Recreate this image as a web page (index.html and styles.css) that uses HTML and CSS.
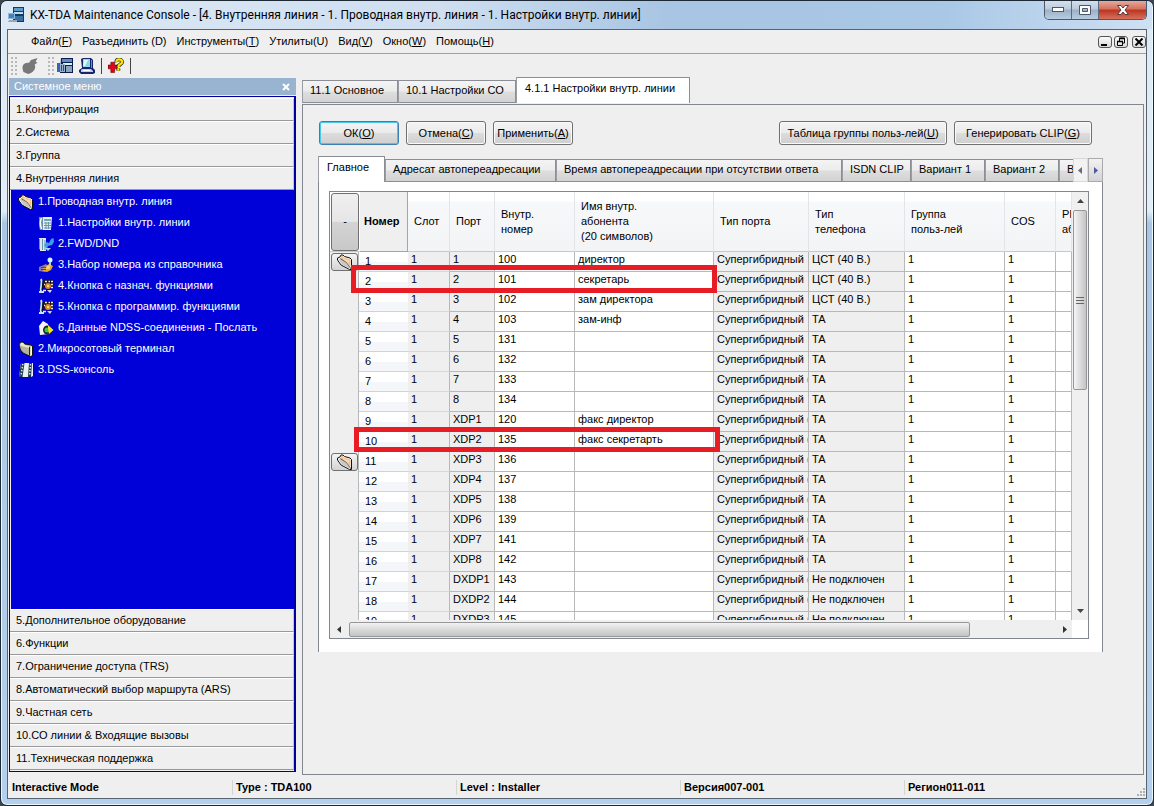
FILE: index.html
```html
<!DOCTYPE html>
<html lang="ru">
<head>
<meta charset="utf-8">
<title>KX-TDA Maintenance Console</title>
<link rel="stylesheet" href="styles.css">
</head>
<body>
<svg class="defs" aria-hidden="true">
  <symbol id="i-folder-open" viewBox="0 0 16 16">
    <path d="M.5 4 3 3 4 1H6L7.500 2.500 13 4 14.500 5.500V15.500H12.500L4 11 .5 6Z" fill="#fff" stroke="#111" stroke-linejoin="round"/>
    <path d="M3.500 4 4.500 2H6L7 3.500 12.500 5 13.500 6V14L11 9 5 6Z" fill="#f5c08a"/>
    <path d="M5 3 8 5 12 6.500V9L7 6Z" fill="#fbdcb4"/>
    <path d="M1 4.500 4 5.500 9.500 9 13 14.500H12L5 10.500Z" fill="#c8c8c8"/>
    <path d="M3 4.500 9.500 8.500 14 15" fill="none" stroke="#444" stroke-width=".8"/>
  </symbol>
  <symbol id="i-folder-shut" viewBox="0 0 16 16">
    <path d="M1 4 2.500 1H5L7 3 13 4 14.500 5V14.500L12.500 15.500 5 12 2.500 9Z" fill="#b4b49c" stroke="#111" stroke-linejoin="round"/>
    <path d="M2 4 3 2H5L6.500 4 11 5 11.500 7 5 5.500Z" fill="#e8e8d8"/>
    <path d="M11.500 6V14.500" stroke="#222"/>
    <path d="M12.500 5.500H14V14L12.500 15Z" fill="#ffffc4"/>
  </symbol>
  <symbol id="i-phone" viewBox="0 0 16 16">
    <path d="M1 2H14L13 15H2Z" fill="#e6f0f4"/>
    <path d="M1 2H5V15H2L1 10Z" fill="#6c93a6"/>
    <path d="M3.500 3C2 6 2 10 3.500 14" stroke="#fff" stroke-width="1.500" fill="none"/>
    <path d="M6 4H13V6H6Z" fill="#6fa7bc"/>
    <path d="M6 8H13M6 10.500H13M6 13H13M8 7V14M10.500 7V14" stroke="#6a94aa" fill="none"/>
  </symbol>
  <symbol id="i-fwd" viewBox="0 0 16 16">
    <path d="M1 2H8V15H2Z" fill="#dce8ee"/>
    <path d="M1.500 3V13M4.500 3V14M7 4V14" stroke="#6a94aa" fill="none"/>
    <path d="M6 9 9 6 11 7 13 3 15.500 2 16 6 14 9 10 10 9 13Z" fill="#38a0e8"/>
    <path d="M7 12H13L10 15Z" fill="#a8d8f0"/>
  </symbol>
  <symbol id="i-book" viewBox="0 0 16 16">
    <path d="M1 10 8 7 10 9 7 15 1 14Z" fill="#8878a0"/>
    <path d="M5 11 11 7 15 9 13 13 9 15 5 14Z" fill="#e8a830"/>
    <path d="M9 9 13 8 11 12 8 12Z" fill="#f8d868"/>
    <path d="M3 10.500H8M3 12.500H8" stroke="#4d4166"/>
    <circle cx="12" cy="3" r="2.500" fill="#d5f3ff"/>
    <path d="M12 5V9" stroke="#a8d0e0" stroke-width="2"/>
  </symbol>
  <symbol id="i-keys" viewBox="0 0 16 16">
    <path d="M6 2H15V10H6Z" fill="#161628"/>
    <path d="M3 1C5 5 2 9 3 13M1 14H6" stroke="#c4e4ee" stroke-width="2" fill="none"/>
    <path d="M5 3 4 12" stroke="#111"/>
    <path d="M7 3.500H9M10.500 3.500H12M13 3.500H15M6 6.500H7M13 6.500H15M5 12.500H8M13 9.500H15" stroke="#e8e8e8" stroke-width="1.500"/>
    <circle cx="10" cy="8" r="3" fill="#e08818"/>
    <circle cx="10" cy="8" r="1.200" fill="#f8e070"/>
    <path d="M9 12H14L12 15Z" fill="#cfdde4"/>
  </symbol>
  <symbol id="i-send" viewBox="0 0 16 16">
    <path d="M1 6 5 1 10 4 11 14 2 15Z" fill="#f4f4f4"/>
    <circle cx="9.500" cy="10" r="4.500" fill="#222"/>
    <circle cx="9" cy="10" r="2.500" fill="#38c848"/>
    <path d="M10 8V5L15.500 10 11 14Z" fill="#f8e818"/>
  </symbol>
  <symbol id="i-dss" viewBox="0 0 16 16">
    <path d="M3 1H15V14L13 15H1Z" fill="#e8f0f0"/>
    <path d="M3 1H6.500L4.500 15H1ZM11 1H14L13 15H10Z" fill="#1c3848"/>
    <path d="M4.800 2 3 14M12.500 2 11.500 14" stroke="#d8ecf4" stroke-width="1.500" stroke-dasharray="1.500 1.500"/>
  </symbol>
  <symbol id="i-console" viewBox="0 0 16 16">
    <path d="M5 0H16V15H5Z" fill="#123a66"/>
    <path d="M6 1H15V4H6Z" fill="#5f9bc8"/>
    <path d="M6 5H15V7H6Z" fill="#c2dcec"/>
    <path d="M7 9H15V14H7Z" fill="#3b72a4"/>
    <path d="M0 6H7V12H0Z" fill="#8fb6d6"/>
    <path d="M1 7H6V11H1Z" fill="#3f83c4"/>
    <path d="M1 13H9V15H0Z" fill="#9aa8b5"/>
  </symbol>
  <symbol id="i-pbx" viewBox="0 0 16 16">
    <path d="M4 0H16V15H3Z" fill="#0c1c50"/>
    <path d="M5 1H15V4H5Z" fill="#5c8cc0"/>
    <path d="M6 5H15V7H6Z" fill="#e0eef8"/>
    <path d="M9 8H15V14H9Z" fill="#8ca4bc"/>
    <path d="M0 5H3V14H0Z" fill="#3c64a8"/>
    <path d="M3 6H8V14H3Z" fill="#98b0cc"/>
    <path d="M4.500 7V13M6.500 7V13" stroke="#26508c"/>
  </symbol>
  <symbol id="i-pc" viewBox="0 0 16 16">
    <path d="M2 1 4 0H12L14 2V10L16 12V15L14 16H2L0 14V12L3 10Z" fill="#17256a"/>
    <path d="M4 1H11V9H4Z" fill="#8bd8ec"/>
    <path d="M5 2H9L6 8H4Z" fill="#dffaff"/>
    <path d="M12 2H13V10H12Z" fill="#6c8cc0"/>
    <path d="M3 11H12L14 13V14H2V12Z" fill="#b8d0e4"/>
    <path d="M4 12.500H11" stroke="#fff"/>
  </symbol>
  <symbol id="i-plug" viewBox="0 0 18 17">
    <path d="M1 11C1 6 4 5 8 5L10 2 17 0 15 4 17 5 14 7C16 12 12 16 7 17L2 15Z" fill="#787878"/>
  </symbol>
  <symbol id="i-help" viewBox="0 0 17 16">
    <path d="M3 4H7V7H10V11H7V15H3V11H0V7H3Z" fill="#e80018" stroke="#500" stroke-width=".6"/>
    <path d="M9 4C8 0 15 0 15 4 15 6 11 6 11 9M11 10.500V13" stroke="#222" stroke-width="4" fill="none"/>
    <path d="M9 4C8 0 15 0 15 4 15 6 11 6 11 9M11 10.500V13" stroke="#ffe600" stroke-width="2.400" fill="none"/>
  </symbol>
</svg>

<div class="window">
  <header class="titlebar">
    <svg class="icon"><use href="#i-console"/></svg>
    <h1 class="title">KX-TDA Maintenance Console - [4. Внутренняя линия - 1. Проводная внутр. линия - 1. Настройки внутр. линии]</h1>
    <div class="caption">
      <button class="cap" aria-label="Свернуть"><svg width="12" height="6"><rect x=".5" y=".5" width="11" height="4" fill="#fff" stroke="#4c5868"/></svg></button>
      <button class="cap" aria-label="Развернуть"><svg width="12" height="10"><path d="M.5.5H11.500V9.500H.5ZM3.500 3.500V6.500H8.500V3.500Z" fill="#fff" fill-rule="evenodd" stroke="#4c5868"/></svg></button>
      <button class="cap cap-close" aria-label="Закрыть"><svg width="12" height="10"><path d="M.5.5H4L6 3 8 .5H11.500L8 5 11.500 9.500H8L6 7 4 9.500H.5L4 5Z" fill="#fff" stroke="#5c3838"/></svg></button>
    </div>
  </header>

  <div class="client">
    <nav class="menubar">
      <button class="menu">Файл(<u>F</u>)</button>
      <button class="menu">Разъединить (D)</button>
      <button class="menu">Инструменты(<u>T</u>)</button>
      <button class="menu">Утилиты(U)</button>
      <button class="menu">Вид(<u>V</u>)</button>
      <button class="menu">Окно(<u>W</u>)</button>
      <button class="menu">Помощь(<u>H</u>)</button>
      <div class="mdi">
        <button class="mdi-btn" aria-label="Свернуть окно"><svg width="10" height="8"><path d="M1 7H7" stroke="#000" stroke-width="2"/></svg></button>
        <button class="mdi-btn" aria-label="Восстановить окно"><svg width="10" height="10"><path d="M3.500 5V1H8.500V6H7M1.500 4.500H6.500V8.500H1.500Z" fill="none" stroke="#000"/><path d="M3 1.500H9M1 4.500H7" stroke="#000" stroke-width="1.500"/></svg></button>
        <button class="mdi-btn mdi-close" aria-label="Закрыть окно"><svg width="10" height="8"><path d="M1.500.5 8.500 7.500M8.500.5 1.500 7.500" stroke="#000" stroke-width="2"/></svg></button>
      </div>
    </nav>

    <div class="toolbar">
      <span class="grip"></span>
      <button class="tool" aria-label="Подключить"><svg class="icon icon-wide"><use href="#i-plug"/></svg></button>
      <span class="grip"></span>
      <button class="tool" aria-label="АТС"><svg class="icon"><use href="#i-pbx"/></svg></button>
      <button class="tool" aria-label="Компьютер"><svg class="icon"><use href="#i-pc"/></svg></button>
      <span class="rule"></span>
      <button class="tool" aria-label="Справка"><svg class="icon"><use href="#i-help"/></svg></button>
      <span class="rule"></span>
    </div>

    <div class="body">
      <aside class="sidebar">
        <div class="side-head"><span>Системное меню</span>
          <button class="side-x" aria-label="Закрыть меню"><svg width="8" height="8"><path d="M1 1 7 7M7 1 1 7" stroke="#fff" stroke-width="2"/></svg></button>
        </div>
        <div class="side-panel">
          <button class="group">1.Конфигурация</button>
          <button class="group">2.Система</button>
          <button class="group">3.Группа</button>
          <button class="group">4.Внутренняя линия</button>
          <div class="tree">
            <a class="node" href="#"><svg class="icon"><use href="#i-folder-open"/></svg>1.Проводная внутр. линия</a>
            <a class="node sub" href="#"><svg class="icon"><use href="#i-phone"/></svg>1.Настройки внутр. линии</a>
            <a class="node sub" href="#"><svg class="icon"><use href="#i-fwd"/></svg>2.FWD/DND</a>
            <a class="node sub" href="#"><svg class="icon"><use href="#i-book"/></svg>3.Набор номера из справочника</a>
            <a class="node sub" href="#"><svg class="icon"><use href="#i-keys"/></svg>4.Кнопка с назнач. функциями</a>
            <a class="node sub" href="#"><svg class="icon"><use href="#i-keys"/></svg>5.Кнопка с программир. функциями</a>
            <a class="node sub" href="#"><svg class="icon"><use href="#i-send"/></svg>6.Данные NDSS-соединения - Послать</a>
            <a class="node" href="#"><svg class="icon"><use href="#i-folder-shut"/></svg>2.Микросотовый терминал</a>
            <a class="node" href="#"><svg class="icon"><use href="#i-dss"/></svg>3.DSS-консоль</a>
          </div>
          <button class="group">5.Дополнительное оборудование</button>
          <button class="group">6.Функции</button>
          <button class="group">7.Ограничение доступа (TRS)</button>
          <button class="group">8.Автоматический выбор маршрута (ARS)</button>
          <button class="group">9.Частная сеть</button>
          <button class="group">10.СО линии &amp; Входящие вызовы</button>
          <button class="group">11.Техническая поддержка</button>
        </div>
      </aside>

      <main class="main">
        <div class="tabs" role="tablist">
          <button class="tab w-osn" role="tab">11.1 Основное</button>
          <button class="tab w-co" role="tab">10.1 Настройки СО</button>
          <button class="tab w-ext tab-on" role="tab" aria-selected="true">4.1.1 Настройки внутр. линии</button>
        </div>
        <section class="page">
          <div class="actions">
            <button class="btn btn-default">ОК(<u>O</u>)</button>
            <button class="btn">Отмена(<u>C</u>)</button>
            <button class="btn">Применить(<u>A</u>)</button>
            <button class="btn btn-table">Таблица группы польз-лей(<u>U</u>)</button>
            <button class="btn btn-clip">Генерировать CLIP(<u>G</u>)</button>
          </div>
          <div class="subtabs">
            <div class="subtab-list" role="tablist">
              <button class="tab w-main tab-on" role="tab" aria-selected="true">Главное</button>
              <button class="tab w-dest" role="tab">Адресат автопереадресации</button>
              <button class="tab w-time" role="tab">Время автопереадресации при отсутствии ответа</button>
              <button class="tab w-isdn" role="tab">ISDN CLIP</button>
              <button class="tab w-var" role="tab">Вариант 1</button>
              <button class="tab w-var" role="tab">Вариант 2</button>
              <button class="tab w-var" role="tab">Вариант 3</button>
            </div>
            <button class="spin" aria-label="Назад"><svg width="5" height="7"><path d="M4 0V7L0 3.500Z" fill="#6a6a78"/></svg></button>
            <button class="spin spin-on" aria-label="Вперёд"><svg width="5" height="7"><path d="M1 0V7L5 3.500Z" fill="#4c5ca0"/></svg></button>
          </div>
          <div class="sheet">
            <div class="grid">
              <div class="view">
                <table class="ext">
                  <colgroup><col class="c-fold"><col class="c-num"><col class="c-slot"><col class="c-port"><col class="c-no"><col class="c-name"><col class="c-ptype"><col class="c-tel"><col class="c-grp"><col class="c-cos"><col class="c-pin"></colgroup>
                  <thead>
                    <tr><th class="corner"><button class="collapse">-</button></th><th class="num-head">Номер</th><th>Слот</th><th>Порт</th><th>Внутр.<br>номер</th><th>Имя внутр.<br>абонента<br>(20 символов)</th><th>Тип порта</th><th>Тип<br>телефона</th><th>Группа<br>польз-лей</th><th>COS</th><th>PIN<br>абонента</th></tr>
                  </thead>
                  <tbody>
                    <tr><td><button class="fold" aria-label="Слот 1"><svg class="icon"><use href="#i-folder-open"/></svg></button></td><th>1</th><td>1</td><td>1</td><td>100</td><td>директор</td><td>Супергибридный</td><td>ЦСТ (40 В.)</td><td>1</td><td>1</td><td></td></tr>
                    <tr><td></td><th>2</th><td>1</td><td>2</td><td>101</td><td>секретарь</td><td>Супергибридный</td><td>ЦСТ (40 В.)</td><td>1</td><td>1</td><td></td></tr>
                    <tr><td></td><th>3</th><td>1</td><td>3</td><td>102</td><td>зам директора</td><td>Супергибридный</td><td>ЦСТ (40 В.)</td><td>1</td><td>1</td><td></td></tr>
                    <tr><td></td><th>4</th><td>1</td><td>4</td><td>103</td><td>зам-инф</td><td>Супергибридный</td><td>ТА</td><td>1</td><td>1</td><td></td></tr>
                    <tr><td></td><th>5</th><td>1</td><td>5</td><td>131</td><td></td><td>Супергибридный</td><td>ТА</td><td>1</td><td>1</td><td></td></tr>
                    <tr><td></td><th>6</th><td>1</td><td>6</td><td>132</td><td></td><td>Супергибридный</td><td>ТА</td><td>1</td><td>1</td><td></td></tr>
                    <tr><td></td><th>7</th><td>1</td><td>7</td><td>133</td><td></td><td>Супергибридный (</td><td>ТА</td><td>1</td><td>1</td><td></td></tr>
                    <tr><td></td><th>8</th><td>1</td><td>8</td><td>134</td><td></td><td>Супергибридный</td><td>ТА</td><td>1</td><td>1</td><td></td></tr>
                    <tr><td></td><th>9</th><td>1</td><td>XDP1</td><td>120</td><td>факс директор</td><td>Супергибридный (</td><td>ТА</td><td>1</td><td>1</td><td></td></tr>
                    <tr><td></td><th>10</th><td>1</td><td>XDP2</td><td>135</td><td>факс секретарть</td><td>Супергибридный (</td><td>ТА</td><td>1</td><td>1</td><td></td></tr>
                    <tr><td><button class="fold" aria-label="Порты XDP"><svg class="icon"><use href="#i-folder-open"/></svg></button></td><th>11</th><td>1</td><td>XDP3</td><td>136</td><td></td><td>Супергибридный (</td><td>ТА</td><td>1</td><td>1</td><td></td></tr>
                    <tr><td></td><th>12</th><td>1</td><td>XDP4</td><td>137</td><td></td><td>Супергибридный (</td><td>ТА</td><td>1</td><td>1</td><td></td></tr>
                    <tr><td></td><th>13</th><td>1</td><td>XDP5</td><td>138</td><td></td><td>Супергибридный (</td><td>ТА</td><td>1</td><td>1</td><td></td></tr>
                    <tr><td></td><th>14</th><td>1</td><td>XDP6</td><td>139</td><td></td><td>Супергибридный (</td><td>ТА</td><td>1</td><td>1</td><td></td></tr>
                    <tr><td></td><th>15</th><td>1</td><td>XDP7</td><td>141</td><td></td><td>Супергибридный (</td><td>ТА</td><td>1</td><td>1</td><td></td></tr>
                    <tr><td></td><th>16</th><td>1</td><td>XDP8</td><td>142</td><td></td><td>Супергибридный (</td><td>ТА</td><td>1</td><td>1</td><td></td></tr>
                    <tr><td></td><th>17</th><td>1</td><td>DXDP1</td><td>143</td><td></td><td>Супергибридный (</td><td>Не подключен</td><td>1</td><td>1</td><td></td></tr>
                    <tr><td></td><th>18</th><td>1</td><td>DXDP2</td><td>144</td><td></td><td>Супергибридный (</td><td>Не подключен</td><td>1</td><td>1</td><td></td></tr>
                    <tr><td></td><th>19</th><td>1</td><td>DXDP3</td><td>145</td><td></td><td>Супергибридный (</td><td>Не подключен</td><td>1</td><td>1</td><td></td></tr>
                  </tbody>
                </table>
              </div>
              <div class="vbar">
                <svg class="arrow" width="7" height="4"><path d="M0 4H7L3.500 0Z" fill="#444"/></svg>
                <div class="vthumb"><svg width="8" height="7"><path d="M0 .5H8M0 3.500H8M0 6.500H8" stroke="#666"/></svg></div>
                <svg class="arrow" width="7" height="4"><path d="M0 0H7L3.500 4Z" fill="#444"/></svg>
              </div>
              <div class="hbar">
                <svg class="arrow" width="4" height="7"><path d="M4 0V7L0 3.500Z" fill="#333"/></svg>
                <div class="htrack"><div class="hthumb"></div></div>
                <svg class="arrow" width="4" height="7"><path d="M0 0V7L4 3.500Z" fill="#333"/></svg>
              </div>
              <div class="mark mark-a"></div>
              <div class="mark mark-b"></div>
            </div>
          </div>
        </section>
      </main>
    </div>

    <footer class="status">
      <span>Interactive Mode</span><span>Type : TDA100</span><span>Level : Installer</span><span>Версия007-001</span><span>Регион011-011</span>
      <svg class="sizer" width="10" height="10"><path d="M7 1H9M7 4H9M4 4H6M7 7H9M4 7H6M1 7H3" stroke="#b0b0b0" stroke-width="2"/></svg>
    </footer>
  </div>
</div>
</body>
</html>
```
FILE: styles.css
```css
* { box-sizing: border-box; }
html, body { height: 100%; }
body {
  margin: 0;
  background: #3a4650;
  font: 11px/15px "Liberation Sans", Arial, sans-serif;
  color: #000;
  overflow: hidden;
}
button {
  font: inherit;
  color: inherit;
  margin: 0;
  padding: 0;
  border: 0;
  background: none;
  white-space: nowrap;
}
.defs { position: absolute; width: 0; height: 0; }
.icon { width: 16px; height: 16px; flex: none; display: block; }
.icon-wide { width: 18px; }

/* window frame */
.window {
  height: 100vh;
  min-height: 600px;
  display: flex;
  flex-direction: column;
  padding: 0 6px 6px;
  border: 1px solid #1d2a36;
  border-radius: 7px;
  background: linear-gradient(#dce8f5 0, #e2edf8 210px, #a9c7e5 222px, #b4d0ec 100%);
  box-shadow: inset 0 0 0 1px #eef6fd;
}
.titlebar {
  display: flex;
  align-items: center;
  flex: none;
  height: 28px;
  margin: 0 -5px;
  padding: 0 5px 0 6px;
  gap: 6px;
  border-radius: 6px 6px 0 0;
  background: linear-gradient(90deg, #dde9f5 0, #cfdff0 38%, #a8c5e3 58%, #a9c8e6 82%, #cfe0f3 100%);
}
.title {
  margin: 0;
  flex: 1;
  min-width: 0;
  overflow: hidden;
  white-space: nowrap;
  font: 12px/16px Roboto, "Open Sans", sans-serif;
}
.caption {
  display: flex;
  align-self: flex-start;
  height: 19px;
  border: 1px solid #4a5a6a;
  border-top: 0;
  border-radius: 0 0 5px 5px;
  overflow: hidden;
}
.cap {
  width: 27px;
  display: flex;
  align-items: center;
  justify-content: center;
  border-right: 1px solid #5a6c7e;
  background: linear-gradient(#d3dfec 0, #bccbdc 45%, #9bb0c6 50%, #b9cde2 100%);
}
.cap-close {
  width: 47px;
  border-right: 0;
  background: linear-gradient(#e6a99c 0, #d4705c 45%, #b93520 50%, #d87058 100%);
}
.client {
  flex: 1;
  min-height: 0;
  display: flex;
  flex-direction: column;
  border: 1px solid #56646f;
  background: #efefef;
}

/* menu and toolbar */
.menubar {
  display: flex;
  align-items: center;
  gap: 10px;
  flex: none;
  height: 24px;
  padding-left: 23px;
  border-bottom: 1px solid #a0a0a0;
}
.mdi { display: flex; gap: 2px; margin-left: auto; }
.mdi-btn {
  width: 14px;
  height: 12px;
  display: flex;
  align-items: center;
  justify-content: center;
  border: 1px solid #555;
  border-radius: 3px;
  background: linear-gradient(#fafafa, #d8d8d8);
}
.mdi-close { margin-left: 2px; }
.toolbar {
  display: flex;
  align-items: center;
  flex: none;
  height: 23px;
  padding-left: 3px;
}
.grip {
  width: 6px;
  height: 18px;
  background: radial-gradient(circle at 1px 1px, #b8b8b8 1px, transparent 1px) 0 0 / 4px 4px;
}
.tool { padding: 0 3px; }
.toolbar .tool:first-of-type { margin-right: 6px; padding-left: 4px; }
.rule { width: 1px; height: 16px; margin: 0 3px; background: #444; }

/* sidebar */
.body { flex: 1; min-height: 0; display: flex; gap: 6px; padding-left: 1px; }
.sidebar { width: 287px; flex: none; display: flex; flex-direction: column; padding: 1px 0 3px; }
.side-head {
  display: flex;
  align-items: center;
  justify-content: space-between;
  flex: none;
  height: 17px;
  padding: 0 6px 0 5px;
  background: #99b4d1;
  color: #fff;
}
.side-x svg { display: block; }
.side-panel {
  flex: 1;
  min-height: 0;
  display: flex;
  flex-direction: column;
  margin-top: 1px;
  padding: 1px 0;
  border: 1px solid #0000a0;
  border-right-width: 2px;
  background: #efefef;
}
.group {
  flex: none;
  height: 23px;
  padding-left: 6px;
  text-align: left;
  border-top: 1px solid #fff;
  border-bottom: 1px solid #999;
  border-right: 1px solid #c0c0e0;
}
.tree {
  flex: 1;
  min-height: 0;
  overflow: hidden;
  margin-left: 1px;
  padding-top: 1px;
  background: #0000d8;
}
.node {
  display: flex;
  align-items: center;
  gap: 4px;
  height: 21px;
  padding-left: 7px;
  color: #fff;
  text-decoration: none;
}
.sub { padding-left: 27px; }

/* tab strips */
.main { flex: 1; min-width: 0; display: flex; flex-direction: column; padding: 0 2px 0 0; }
.tabs { display: flex; align-items: flex-end; flex: none; height: 26px; margin-bottom: 1px; }
.tab {
  flex: none;
  height: 23px;
  padding: 0 0 2px 7px;
  text-align: left;
  border: 1px solid #8b8e94;
  border-left-color: #9a9da4;
  background: linear-gradient(#f4f4f4 0, #ececec 48%, #dedede 52%, #d2d2d2 100%);
}
.tab-on {
  height: 26px;
  padding: 0 0 4px 8px;
  border-bottom: 0;
  background: #fff;
}
.w-osn { width: 96px; }
.w-co { width: 118px; }
.w-ext { width: 174px; }
.w-main { width: 67px; }
.w-dest { width: 171px; }
.w-time { width: 286px; }
.w-isdn { width: 69px; }
.w-var { width: 74px; }

/* page */
.page {
  flex: 1;
  min-height: 0;
  border: 1px solid #82878f;
  padding: 16px 40px 0 15px;
  overflow: hidden;
}
.actions { display: flex; gap: 7px; padding: 0 11px 0 1px; }
.btn {
  flex: none;
  width: 80px;
  height: 24px;
  border: 1px solid #707070;
  border-radius: 3px;
  background: linear-gradient(#f4f4f4 0, #ebebeb 48%, #dcdcdc 52%, #cfcfcf 100%);
  box-shadow: inset 0 0 0 1px #fafafa;
}
.btn-default { border-color: #3c7fb1; box-shadow: inset 0 0 0 1px #48c8ec; }
.btn-table { width: 168px; margin-left: auto; }
.btn-clip { width: 138px; }
.subtabs { display: flex; align-items: flex-end; height: 26px; margin-top: 11px; }
.subtab-list { display: flex; align-items: flex-end; flex: 1; min-width: 0; overflow: hidden; }
.spin {
  flex: none;
  width: 15px;
  height: 24px;
  display: flex;
  align-items: center;
  justify-content: center;
  border: 1px solid #d8d8d8;
  background: #f2f2f2;
}
.spin-on { border-color: #aaa; background: linear-gradient(#f2f2f2, #d4d4d8); }
.sheet {
  padding: 9px 13px 13px 10px;
  border: 1px solid #82878f;
  border-width: 0 1px;
  background: #fff;
}

/* extension table */
.grid {
  position: relative;
  display: grid;
  grid-template-columns: minmax(0, 1fr) 16px;
  border: 1px solid #82878f;
}
.view { height: 428px; overflow: hidden; background: #fff; }
.ext { width: 742px; table-layout: fixed; border-collapse: separate; border-spacing: 0; }
.c-fold { width: 29px; }
.c-num { width: 49px; }
.c-slot { width: 42px; }
.c-port { width: 45px; }
.c-no { width: 80px; }
.c-name { width: 139px; }
.c-ptype { width: 95px; }
.c-tel { width: 96px; }
.c-grp { width: 100px; }
.c-cos { width: 51px; }
.c-pin { width: 16px; }
.ext th, .ext td {
  padding: 0;
  overflow: hidden;
  white-space: nowrap;
  text-align: left;
  font-weight: normal;
}
.ext thead th {
  height: 60px;
  padding-left: 6px;
  border-right: 1px solid #e2e5e8;
  border-bottom: 1px solid #c8c8c8;
  background: linear-gradient(#fff 0, #fff 9px, #f6f8fa 10px, #f3f4f6 100%);
}
.ext thead .corner { padding: 0 0 0 1px; border-right: 0; background: #fff; }
.ext thead .num-head {
  padding-left: 4px;
  font-weight: bold;
  background: #efefef;
  border-color: #a5a5a5;
  border-left: 1px solid #fff;
}
.collapse {
  display: block;
  width: 28px;
  height: 58px;
  border: 1px solid #707070;
  border-radius: 3px;
  background: linear-gradient(#f0f0f0 0, #e6e6e6 49%, #d4d4d4 50%, #c8c8c8 100%);
}
.ext tbody td, .ext tbody th { height: 20px; }
.ext tbody td { padding: 0 0 4px 3px; border-right: 1px solid #b8b8b8; border-bottom: 1px solid #b8b8b8; }
.ext tbody th {
  padding-left: 6px;
  border-bottom: 1px solid #cfd3d8;
  background: linear-gradient(#fff 50%, #f4f6f9 55%);
}
.ext tbody td:first-child { padding: 0 0 0 1px; border-bottom: 0; background: #efefef; }
.ext tbody td:nth-child(3),
.ext tbody td:nth-child(4),
.ext tbody td:nth-child(7),
.ext tbody td:nth-child(8) { background: #efefef; }
.ext tbody td:nth-child(3) { border-bottom-color: #d8d8d8; }
.fold {
  width: 27px;
  height: 18px;
  display: flex;
  align-items: center;
  justify-content: center;
  border: 1px solid #707070;
  border-radius: 3px;
  background: linear-gradient(#f4f4f4, #d4d4d4);
}

/* scroll bars */
.vbar {
  display: flex;
  flex-direction: column;
  align-items: center;
  justify-content: space-between;
  padding: 7px 0;
  background: #f0f0f0;
}
.arrow { flex: none; display: block; }
.vthumb {
  width: 14px;
  height: 180px;
  margin: 7px 0 auto;
  display: flex;
  align-items: center;
  justify-content: center;
  border: 1px solid #979797;
  border-radius: 2px;
  background: linear-gradient(90deg, #f4f4f4, #c4c4c8);
}
.hbar {
  display: flex;
  align-items: center;
  gap: 8px;
  height: 18px;
  padding: 0 5px 0 7px;
  background: #efefef;
}
.htrack { flex: 1; }
.hthumb {
  width: 88%;
  height: 15px;
  border: 1px solid #979797;
  border-radius: 2px;
  background: linear-gradient(#f2f2f2 0, #dcdcdc 45%, #c4c4c8 100%);
}

/* highlight frames over table rows */
.mark { position: absolute; border: 5px solid #e81c24; }
.mark-a { left: 21px; top: 73px; width: 366px; height: 28px; }
.mark-b { left: 24px; top: 235px; width: 366px; height: 25px; }

/* status bar */
.status {
  display: grid;
  grid-template-columns: repeat(5, 224px) 1fr;
  align-items: center;
  flex: none;
  height: 23px;
  padding-top: 2px;
  font-weight: bold;
}
.status span { padding-left: 3px; border-left: 1px solid #d4d4d4; }
.status span:first-child { padding-left: 4px; border-left: 0; }
.sizer { justify-self: end; align-self: end; }
```
